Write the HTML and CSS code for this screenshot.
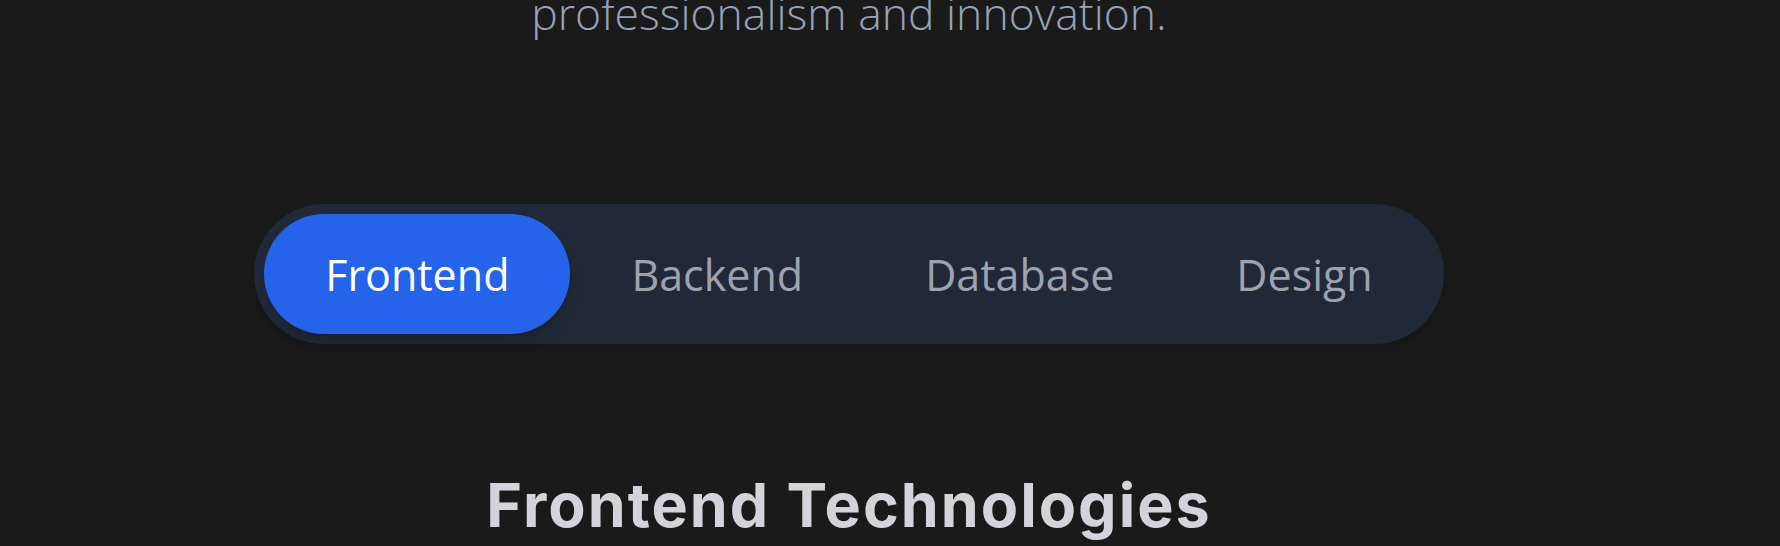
FILE: index.html
```html
<!DOCTYPE html>
<html lang="en">
<head>
<meta charset="utf-8">
<title>Technologies</title>
<link rel="stylesheet" href="styles.css">
</head>
<body>
<div class="page">
  <p class="intro">professionalism and innovation.</p>
  <div class="tabs-row">
    <nav class="tabs">
      <button class="tab active">Frontend</button>
      <button class="tab">Backend</button>
      <button class="tab">Database</button>
      <button class="tab">Design</button>
    </nav>
  </div>
  <h2 class="heading">Frontend Technologies</h2>
</div>
</body>
</html>
```

FILE: styles.css
```css
html, body {
  margin: 0;
  padding: 0;
  background: #1a1a1a;
  height: 546px;
  overflow: hidden;
}
.page {
  width: 1698px;
  text-align: center;
}
.intro {
  margin: -19px 0 0;
  font-family: "Open Sans", "Liberation Sans", sans-serif;
  font-weight: 300;
  font-size: 44.5px;
  line-height: 64px;
  color: #94a3b8;
}
.tabs-row {
  display: flex;
  justify-content: center;
  margin-top: 159px;
}
.tabs {
  display: flex;
  padding: 10px;
  background: #212938;
  border-radius: 70px;
  box-shadow: 0 10px 15px -3px rgba(0,0,0,0.1), 0 4px 6px -4px rgba(0,0,0,0.1);
}
.tab {
  height: 120px;
  padding: 0 61px;
  border: 0;
  border-radius: 60px;
  background: transparent;
  font-family: "Open Sans", "Liberation Sans", sans-serif;
  font-weight: 400;
  font-size: 43px;
  color: #9ca3af;
  cursor: pointer;
}
.tab.active {
  background: #2563eb;
  color: #ffffff;
  box-shadow: 0 10px 15px -3px rgba(0,0,0,0.15), 0 4px 6px -4px rgba(0,0,0,0.15);
}
.heading {
  margin: 125px 0 0;
  font-family: "Inter", "Liberation Sans", sans-serif;
  font-weight: 700;
  font-size: 61px;
  letter-spacing: 2px;
  line-height: 1.2;
  color: #d1d5db;
}
```
